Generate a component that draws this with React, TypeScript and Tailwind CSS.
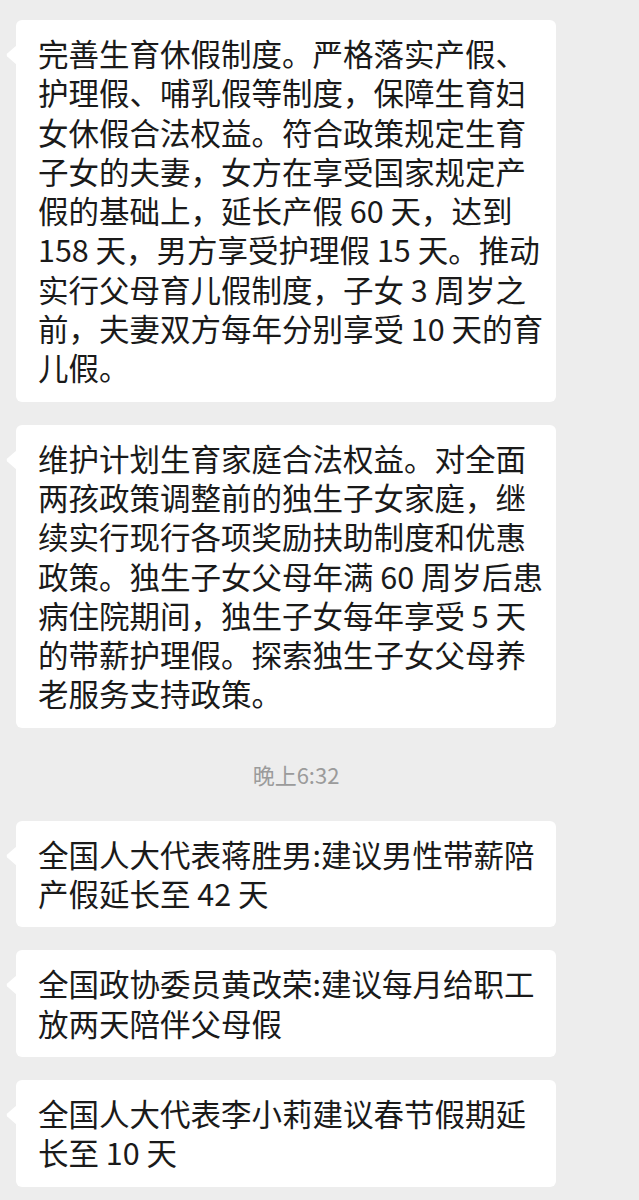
const messages: { lines: string[] }[] = [
  {
    lines: [
      "完善生育休假制度。严格落实产假、",
      "护理假、哺乳假等制度，保障生育妇",
      "女休假合法权益。符合政策规定生育",
      "子女的夫妻，女方在享受国家规定产",
      "假的基础上，延长产假 60 天，达到",
      "158 天，男方享受护理假 15 天。推动",
      "实行父母育儿假制度，子女 3 周岁之",
      "前，夫妻双方每年分别享受 10 天的育",
      "儿假。",
    ],
  },
  {
    lines: [
      "维护计划生育家庭合法权益。对全面",
      "两孩政策调整前的独生子女家庭，继",
      "续实行现行各项奖励扶助制度和优惠",
      "政策。独生子女父母年满 60 周岁后患",
      "病住院期间，独生子女每年享受 5 天",
      "的带薪护理假。探索独生子女父母养",
      "老服务支持政策。",
    ],
  },
];

const later: { lines: string[] }[] = [
  { lines: ["全国人大代表蒋胜男:建议男性带薪陪", "产假延长至 42 天"] },
  { lines: ["全国政协委员黄改荣:建议每月给职工", "放两天陪伴父母假"] },
  { lines: ["全国人大代表李小莉建议春节假期延", "长至 10 天"] },
];

function Bubble({ lines }: { lines: string[] }) {
  return (
    <div className="relative w-[540px] rounded-md bg-white pl-[22px] pr-4 py-[14px] text-[30.5px] leading-[39.3px] text-[#1a1a1a]">
      {/* tail */}
      <svg
        className="absolute left-[-10px] top-[25px]"
        width="11"
        height="20"
        viewBox="0 0 11 20"
      >
        <path d="M11 0 L1.2 8.6 Q0 10 1.2 11.4 L11 20 Z" fill="#ffffff" />
      </svg>
      {lines.map((l, i) => (
        <div key={i} className="whitespace-nowrap">
          {l}
        </div>
      ))}
    </div>
  );
}

export default function App() {
  return (
    <div
      className="min-h-[1200px] w-[639px] bg-[#ededed] pl-4 pt-5"
      style={{ fontFamily: '"Noto Sans CJK SC", "Noto Sans", sans-serif' }}
    >
      <div className="flex flex-col gap-[23px]">
        {messages.map((m, i) => (
          <Bubble key={i} lines={m.lines} />
        ))}
      </div>

      <div className="w-[560px] py-[31px] text-center text-[22px] leading-[31px] text-[#9b9b9b]">
        晚上6:32
      </div>

      <div className="flex flex-col gap-[23px]">
        {later.map((m, i) => (
          <Bubble key={i} lines={m.lines} />
        ))}
      </div>
    </div>
  );
}
